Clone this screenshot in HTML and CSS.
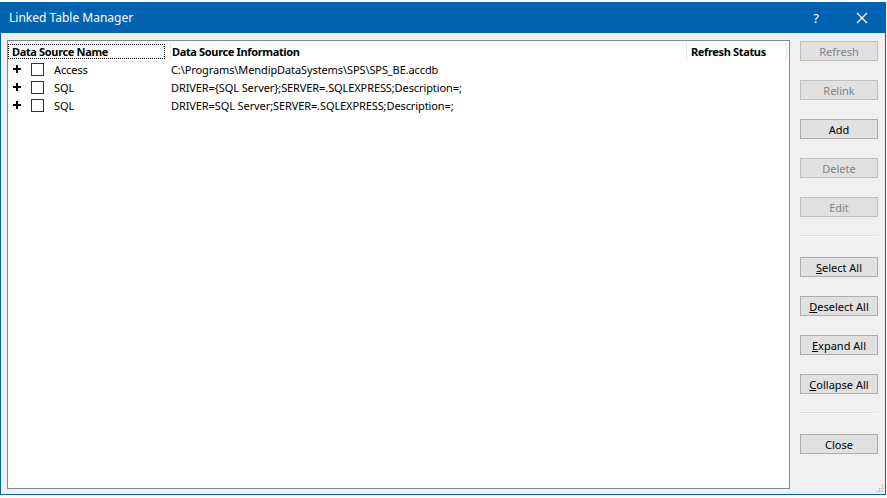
FILE: index.html
```html
<!DOCTYPE html>
<html lang="en">
<head>
  <meta charset="UTF-8" />
  <title>Linked Table Manager</title>
  <link rel="stylesheet" href="styles.css">
</head>
<body>
  <div class="window">
    <div class="titlebar">
      <span class="title">Linked Table Manager</span>
      <span class="help">?</span>
      <svg class="close" width="12" height="12" viewBox="0 0 12 12">
        <path d="M1 1 L11 11 M11 1 L1 11" stroke="#fff" stroke-width="1.3" fill="none"/>
      </svg>
    </div>
    <div class="client">
      <div class="listbox">
        <div class="header">
          <div class="col col-name"><span class="focus">Data Source Name</span></div>
          <div class="col col-info">Data Source Information</div>
          <div class="col col-status">Refresh Status</div>
        </div>
        <div class="row">
          <div class="col col-name">
            <svg class="plus" width="8" height="8" viewBox="0 0 8 8"><path d="M0 3h8v2H0zM3 0h2v8H3z" fill="#000"/></svg>
            <span class="check"></span>
            <span>Access</span>
          </div>
          <div class="col col-info">C:\Programs\MendipDataSystems\SPS\SPS_BE.accdb</div>
        </div>
        <div class="row">
          <div class="col col-name">
            <svg class="plus" width="8" height="8" viewBox="0 0 8 8"><path d="M0 3h8v2H0zM3 0h2v8H3z" fill="#000"/></svg>
            <span class="check"></span>
            <span>SQL</span>
          </div>
          <div class="col col-info">DRIVER={SQL Server};SERVER=.SQLEXPRESS;Description=;</div>
        </div>
        <div class="row">
          <div class="col col-name">
            <svg class="plus" width="8" height="8" viewBox="0 0 8 8"><path d="M0 3h8v2H0zM3 0h2v8H3z" fill="#000"/></svg>
            <span class="check"></span>
            <span>SQL</span>
          </div>
          <div class="col col-info">DRIVER=SQL Server;SERVER=.SQLEXPRESS;Description=;</div>
        </div>
      </div>
      <div class="buttons">
        <button disabled>Refresh</button>
        <button disabled>Relink</button>
        <button>Add</button>
        <button disabled>Delete</button>
        <button disabled>Edit</button>
        <div class="sep"></div>
        <button><u>S</u>elect All</button>
        <button><u>D</u>eselect All</button>
        <button><u>E</u>xpand All</button>
        <button><u>C</u>ollapse All</button>
        <div class="sep"></div>
        <button>Close</button>
      </div>
      <div class="grip"></div>
    </div>
  </div>
</body>
</html>
```

FILE: styles.css
```css
body {
  margin: 0;
  background: #fff;
  font-family: "Noto Sans", "DejaVu Sans", sans-serif;
  font-size: 11px;
}
.window {
  margin-top: 2px;
  width: 886px;
  height: 493px;
  box-sizing: border-box;
  border: 1px solid #0063b1;
  border-top: none;
  display: flex;
  flex-direction: column;
}
.titlebar {
  height: 31px;
  background: #0063b1;
  color: #fff;
  display: flex;
  align-items: center;
  padding-left: 8px;
}
.title {
  font-size: 12px;
  flex: 1;
}
.help {
  font-size: 13px;
  margin-right: 37px;
}
.close {
  margin-right: 17px;
}
.client {
  flex: 1;
  background: #f0f0f0;
  display: flex;
  padding: 7px 0 5px 6px;
  position: relative;
}
.listbox {
  width: 783px;
  box-sizing: border-box;
  border: 1px solid #828790;
  background: #fff;
  letter-spacing: -0.1px;
}
.header, .row {
  display: flex;
  height: 18px;
  align-items: center;
}
.header {
  margin-top: 2px;
  font-weight: bold;
  height: 17px;
  letter-spacing: -0.35px;
}
.header .col {
  border-right: 1px solid #e5e5e5;
  height: 17px;
  display: flex;
  align-items: center;
  box-sizing: border-box;
}
.col {
  white-space: nowrap;
  overflow: hidden;
}
.col-name {
  width: 159px;
  padding-left: 4px;
  display: flex;
  align-items: center;
}
.col-info {
  width: 520px;
  padding-left: 0;
}
.col-status {
  width: 100px;
  padding-left: 4px;
}
.header .col-name {
  width: 163px;
  padding-left: 1px;
}
.header .col-info {
  width: 516px;
  padding-left: 1px;
}
.focus {
  display: block;
  width: 152px;
  outline: 1px dotted #000;
  padding-left: 3px;
  line-height: 13px;
}
.plus {
  margin-left: 1px;
}
.check {
  width: 11px;
  height: 11px;
  border: 1px solid #333;
  margin-left: 10px;
  margin-right: 10px;
}
.buttons {
  margin-left: 10px;
  padding-top: 1px;
  width: 78px;
  display: flex;
  flex-direction: column;
}
button {
  font-family: inherit;
  font-size: 11px;
  height: 20px;
  margin-bottom: 19px;
  background: #e1e1e1;
  border: 1px solid #adadad;
  color: #000;
  padding: 0;
}
button:disabled {
  color: #838383;
  border-color: #bfbfbf;
}
.sep {
  height: 0;
  border-top: 1px solid #e0e0e0;
  border-bottom: 1px solid #fff;
  margin: -1px 0 20px;
}
.grip {
  position: absolute;
  right: 2px;
  bottom: 2px;
  width: 8px;
  height: 8px;
  background:
    radial-gradient(circle, #b8b8b8 45%, transparent 50%) 0 0 / 3px 3px;
  clip-path: polygon(100% 0, 100% 100%, 0 100%);
}
```
